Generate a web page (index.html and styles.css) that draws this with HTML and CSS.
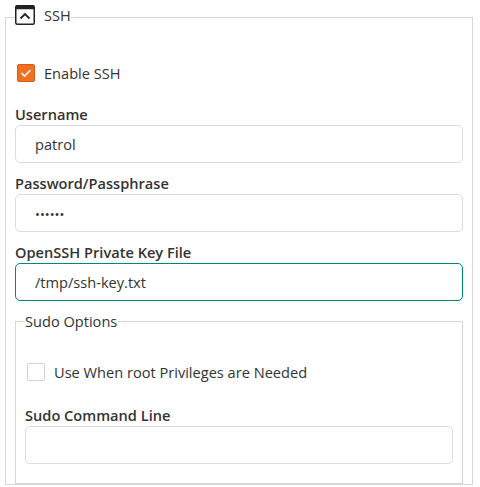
FILE: index.html
```html
<!DOCTYPE html>
<html>
<head>
<meta charset="utf-8">
<link rel="stylesheet" href="styles.css">
</head>
<body>
<fieldset class="group">
  <legend class="group-legend">
    <span class="collapse-icon">
      <svg width="20" height="20" viewBox="0 0 20 20">
        <rect x="0.75" y="0.75" width="18.5" height="18.5" rx="1.5" fill="none" stroke="#222" stroke-width="1.5"/>
        <rect x="0.75" y="0.75" width="18.5" height="3.5" fill="#222"/>
        <path d="M5.5 13.5 L10 9 L14.5 13.5" fill="none" stroke="#222" stroke-width="1.8"/>
      </svg>
    </span>
    <span class="legend-text">SSH</span>
  </legend>

  <label class="check-row first-check">
    <span class="checkbox checked">
      <svg width="12" height="10" viewBox="0 0 12 10"><path d="M1.5 5 L4.5 8 L10.5 2" fill="none" stroke="#fff" stroke-width="1.6"/></svg>
    </span>
    <span>Enable SSH</span>
  </label>

  <div class="field">
    <div class="field-label">Username</div>
    <div class="input">patrol</div>
  </div>
  <div class="field">
    <div class="field-label">Password/Passphrase</div>
    <div class="input dots">••••••</div>
  </div>
  <div class="field">
    <div class="field-label">OpenSSH Private Key File</div>
    <div class="input focused">/tmp/ssh-key.txt</div>
  </div>

  <fieldset class="subgroup">
    <legend class="sub-legend">Sudo Options</legend>
    <label class="check-row sub-check">
      <span class="checkbox"></span>
      <span>Use When root Privileges are Needed</span>
    </label>
    <div class="field">
      <div class="field-label">Sudo Command Line</div>
      <div class="input"></div>
    </div>
  </fieldset>
</fieldset>
</body>
</html>
```
FILE: styles.css
```css
html, body {
  margin: 0;
  padding: 0;
  background: #fff;
}
body {
  font-family: "Open Sans", "Noto Sans", sans-serif;
  font-size: 14.6px;
  color: #333;
  line-height: 20px;
}
.group {
  margin: 5px 0 0 5px;
  width: 468px;
  box-sizing: border-box;
  border: 1px solid #d6d6d6;
  padding: 0 9px 0 9px;
  min-width: 0;
}
.group-legend {
  padding: 0;
  margin-left: 0;
  display: flex;
  align-items: center;
  gap: 9px;
  height: 24px;
}
.collapse-icon {
  display: block;
  width: 20px;
  height: 20px;
  margin-top: -4px;
}
.collapse-icon svg { display: block; }
.legend-text {
  margin-top: -4px;
}
.check-row {
  display: flex;
  align-items: center;
  gap: 9px;
}
.first-check {
  margin-top: 34px;
  margin-left: 2px;
  margin-bottom: 21px;
}
.checkbox {
  width: 18px;
  height: 18px;
  box-sizing: border-box;
  border: 1px solid #d0d0d0;
  border-radius: 2px;
  display: flex;
  align-items: center;
  justify-content: center;
  background: #fff;
}
.checkbox.checked {
  background: #f37021;
  border-color: #d75d12;
}
.field {
  margin-bottom: 10px;
}
.field-label {
  font-weight: 600;
  height: 20px;
  margin-bottom: 1px;
}
.input {
  height: 38px;
  box-sizing: border-box;
  border: 1px solid #dcdcdc;
  border-radius: 5px;
  padding: 0 19px;
  display: flex;
  align-items: center;
}
.input.dots {
  font-size: 13px;
  padding-top: 2px;
}
.input.focused {
  border-color: #00877a;
}
.subgroup {
  margin: 0;
  border: 1px solid #d6d6d6;
  padding: 0 9px 9px 9px;
  min-width: 0;
}
.sub-legend {
  padding: 0 1px;
  margin-left: -1px;
  line-height: 20px;
}
.sub-check {
  margin-top: 31px;
  margin-left: 2px;
  margin-bottom: 23px;
}
```
